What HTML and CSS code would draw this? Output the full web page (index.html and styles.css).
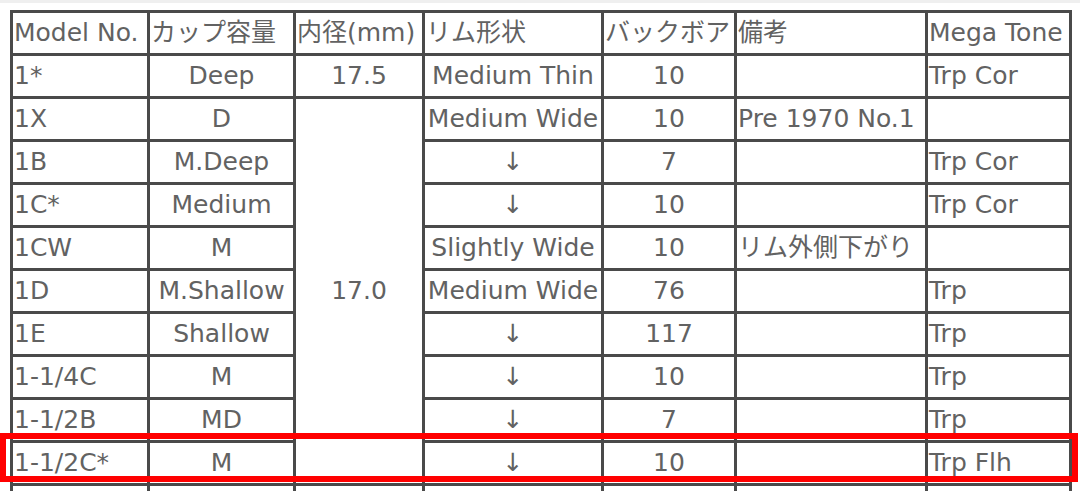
FILE: index.html
```html
<!DOCTYPE html>
<html lang="ja">
<head>
<meta charset="utf-8">
<title>Mouthpiece table</title>
<link rel="stylesheet" href="styles.css">
</head>
<body>
<div class="page">
  <div class="topstrip"></div>
  <table class="spec">
    <colgroup>
      <col class="c1"><col class="c2"><col class="c3"><col class="c4"><col class="c5"><col class="c6"><col class="c7">
    </colgroup>
    <tr>
      <th>Model No.</th><th>カップ容量</th><th>内径(mm)</th><th>リム形状</th><th>バックボア</th><th>備考</th><th>Mega Tone</th>
    </tr>
    <tr>
      <td>1*</td><td class="ctr">Deep</td><td class="ctr">17.5</td><td class="ctr">Medium Thin</td><td class="ctr">10</td><td></td><td>Trp Cor</td>
    </tr>
    <tr>
      <td>1X</td><td class="ctr">D</td><td class="ctr" rowspan="9">17.0</td><td class="ctr">Medium Wide</td><td class="ctr">10</td><td>Pre 1970 No.1</td><td></td>
    </tr>
    <tr>
      <td>1B</td><td class="ctr">M.Deep</td><td class="ctr">↓</td><td class="ctr">7</td><td></td><td>Trp Cor</td>
    </tr>
    <tr>
      <td>1C*</td><td class="ctr">Medium</td><td class="ctr">↓</td><td class="ctr">10</td><td></td><td>Trp Cor</td>
    </tr>
    <tr>
      <td>1CW</td><td class="ctr">M</td><td class="ctr">Slightly Wide</td><td class="ctr">10</td><td>リム外側下がり</td><td></td>
    </tr>
    <tr>
      <td>1D</td><td class="ctr">M.Shallow</td><td class="ctr">Medium Wide</td><td class="ctr">76</td><td></td><td>Trp</td>
    </tr>
    <tr>
      <td>1E</td><td class="ctr">Shallow</td><td class="ctr">↓</td><td class="ctr">117</td><td></td><td>Trp</td>
    </tr>
    <tr>
      <td>1-1/4C</td><td class="ctr">M</td><td class="ctr">↓</td><td class="ctr">10</td><td></td><td>Trp</td>
    </tr>
    <tr>
      <td>1-1/2B</td><td class="ctr">MD</td><td class="ctr">↓</td><td class="ctr">7</td><td></td><td>Trp</td>
    </tr>
    <tr>
      <td>1-1/2C*</td><td class="ctr">M</td><td class="ctr">↓</td><td class="ctr">10</td><td></td><td>Trp Flh</td>
    </tr>
    <tr>
      <td></td><td></td><td></td><td></td><td></td><td></td><td></td>
    </tr>
  </table>
  <div class="highlight"></div>
</div>
</body>
</html>
```

FILE: styles.css
```css
html, body {
  margin: 0;
  padding: 0;
  background: #ffffff;
  overflow: hidden;
}

.page {
  position: relative;
  width: 1080px;
  height: 491px;
  overflow: hidden;
  font-family: "DejaVu Sans", "Noto Sans CJK JP", sans-serif;
  font-size: 25px;
  color: #626262;
}

.topstrip {
  height: 3px;
  background: #efefef;
  margin-bottom: 7px;
}

.spec {
  margin-left: 10px;
  border-collapse: collapse;
  table-layout: fixed;
  width: 1061px;
}

.c1 { width: 137px; }
.c2 { width: 146px; }
.c3 { width: 129px; }
.c4 { width: 179px; }
.c5 { width: 133px; }
.c6 { width: 191px; }
.c7 { width: 144px; }

.spec th,
.spec td {
  border: 3px solid #4a4a4a;
  height: 40px;
  padding: 0 1px;
  line-height: 30px;
  white-space: nowrap;
  overflow: hidden;
  vertical-align: middle;
  text-align: left;
  font-weight: normal;
}

.spec td.ctr {
  text-align: center;
}

.highlight {
  position: absolute;
  left: 0;
  top: 433px;
  width: 1078px;
  height: 49px;
  box-sizing: border-box;
  border: 6px solid #ff0000;
}
```
